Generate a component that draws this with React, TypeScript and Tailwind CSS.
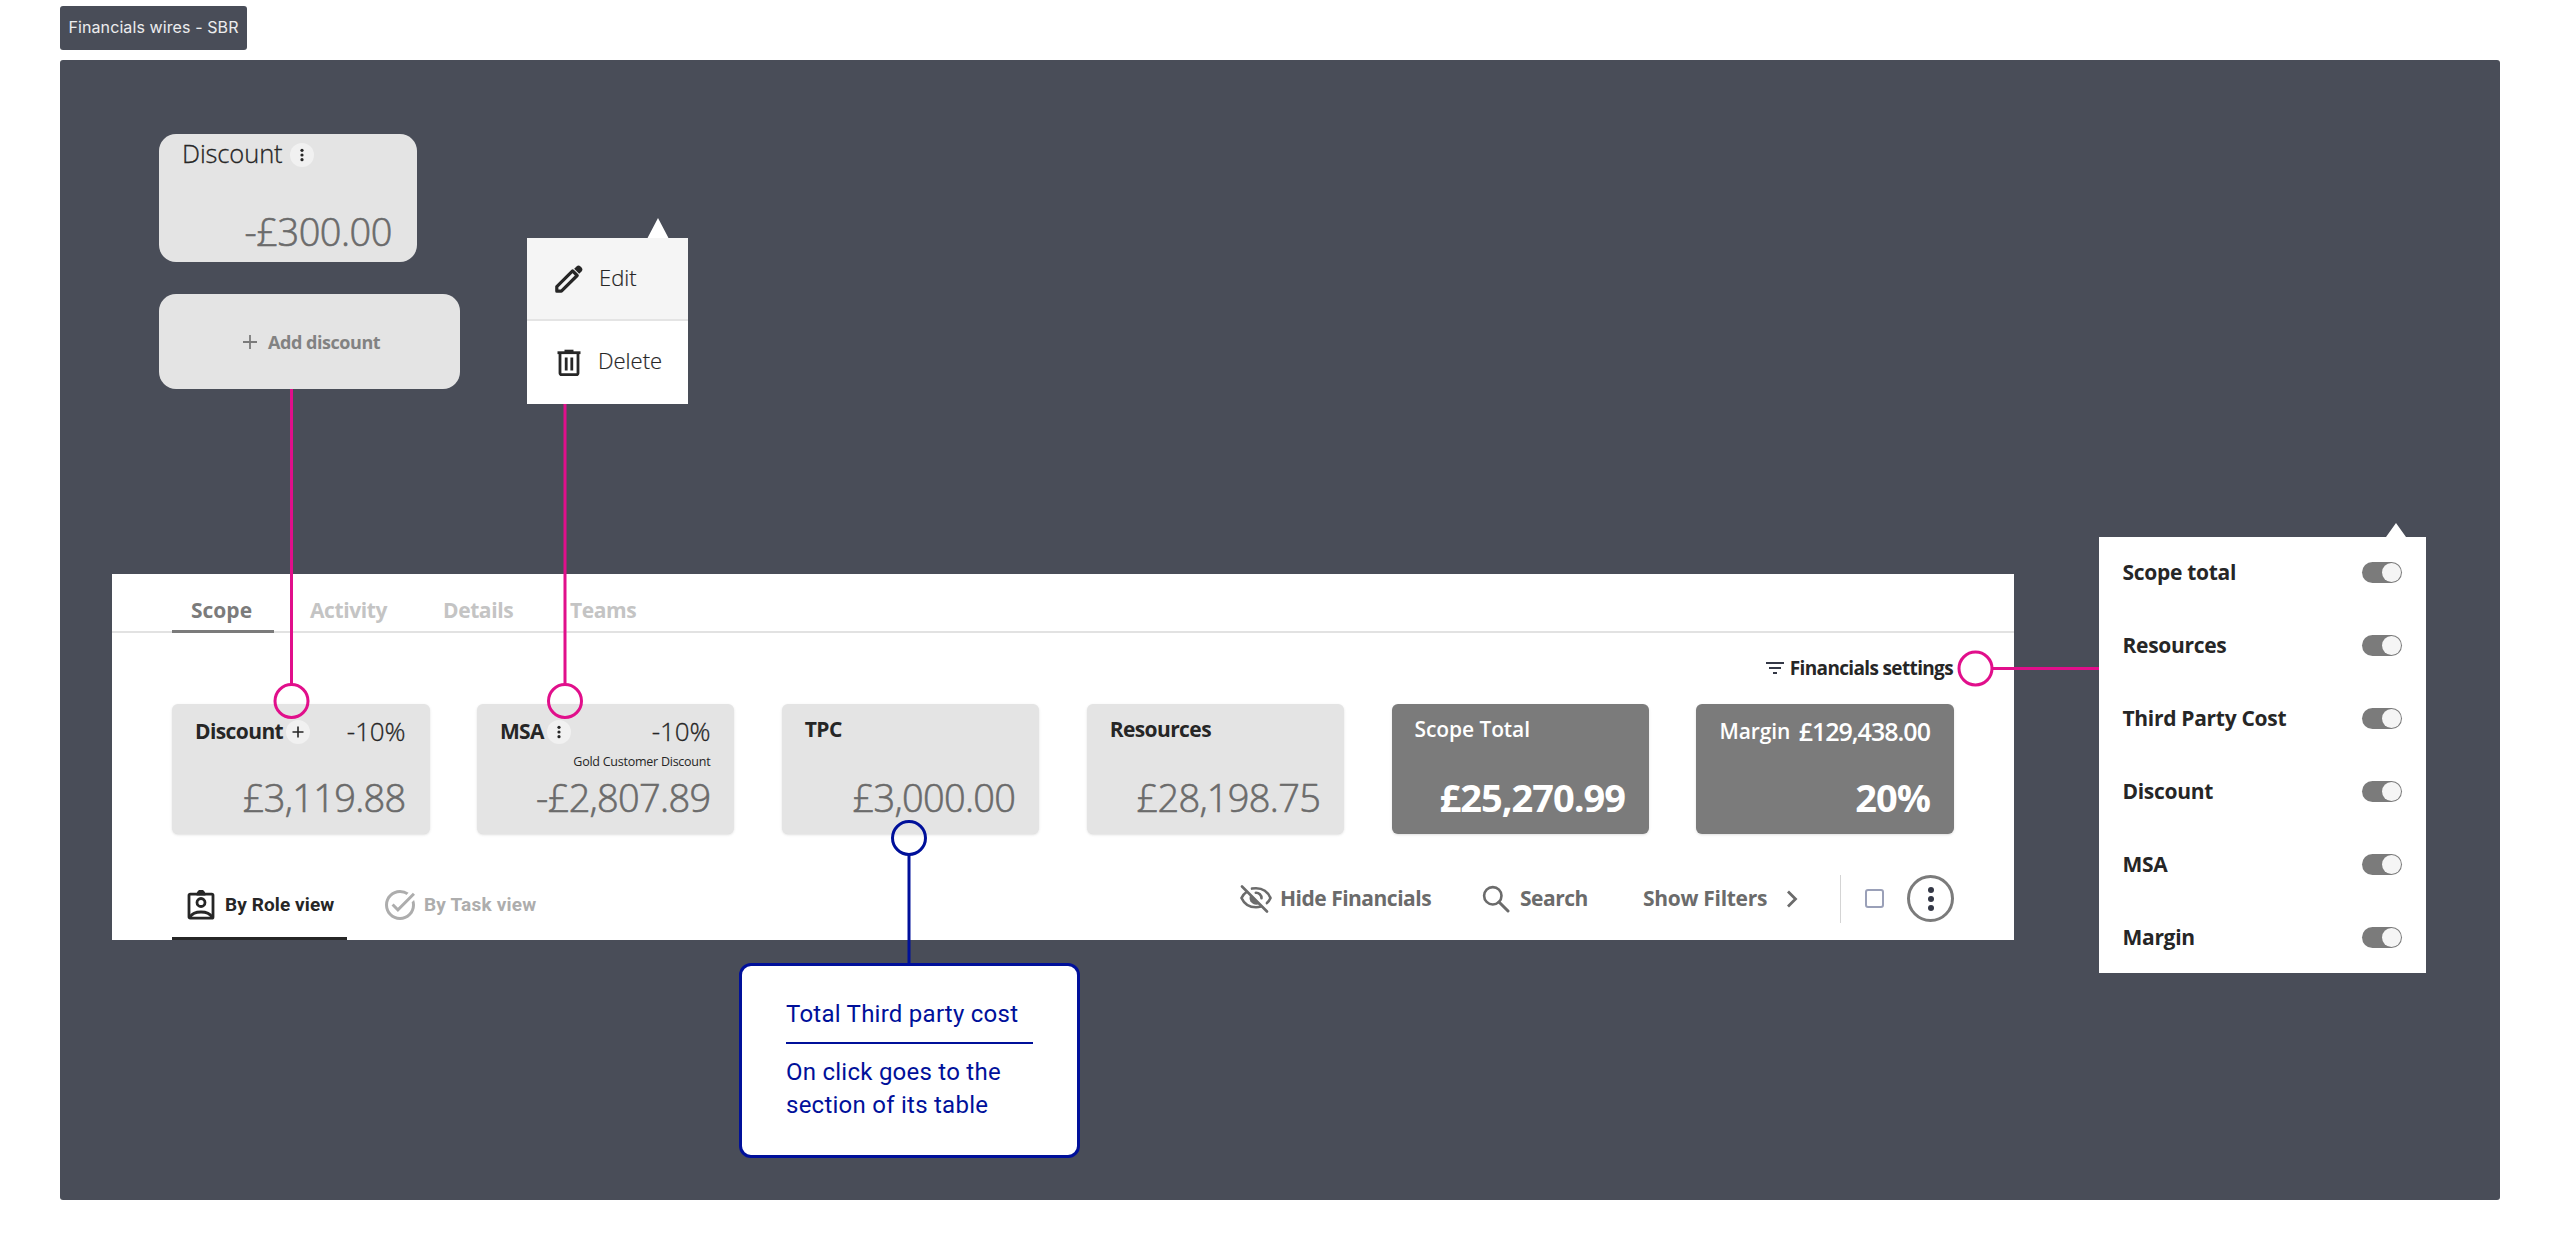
import React from 'react';
import { MdFilterList, MdTaskAlt } from 'react-icons/md';

type SummaryCard = {
  title: string;
  value: string;
  rate?: string;
  note?: string;
  badge?: 'plus' | 'dots';
  dark?: boolean;
};

const cards: SummaryCard[] = [
  { title: 'Discount', value: '£3,119.88', rate: '-10%', badge: 'plus' },
  { title: 'MSA', value: '-£2,807.89', rate: '-10%', note: 'Gold Customer Discount', badge: 'dots' },
  { title: 'TPC', value: '£3,000.00' },
  { title: 'Resources', value: '£28,198.75' },
  { title: 'Scope Total', value: '£25,270.99', dark: true },
  { title: 'Margin', value: '20%', rate: '£129,438.00', dark: true },
];

const settings = ['Scope total', 'Resources', 'Third Party Cost', 'Discount', 'MSA', 'Margin'];

const Dots = () => (
  <svg viewBox="0 0 24 24" className="size-6" fill="#262626">
    <circle cx="12" cy="7.3" r="1.6" />
    <circle cx="12" cy="12" r="1.6" />
    <circle cx="12" cy="16.7" r="1.6" />
  </svg>
);

const Plus = () => (
  <svg viewBox="0 0 24 24" className="size-6" stroke="#262626" strokeWidth="1.6">
    <path d="M12 6.5v11M6.5 12h11" />
  </svg>
);

const PencilIcon = () => (
  <svg viewBox="0 0 28 28" className="size-7" fill="none" stroke="#262626" strokeWidth="3.2">
    <path d="M1.8 26.2v-4.6L17.6 5.9l4.6 4.6L6.4 26.2z" strokeLinejoin="round" />
    <path d="M19.2 3.8 21.5 1.500a3 3 0 0 1 4 0l1 1a3 3 0 0 1 0 4l-2.300 2.300z" fill="#262626" stroke="none" />
  </svg>
);

const TrashIcon = () => (
  <svg viewBox="0 0 24 28" className="h-7 w-6" fill="none" stroke="#262626" strokeWidth="2.8">
    <path d="M.5 3.7h23" />
    <path d="M7.500 2h9" strokeWidth="2.6" />
    <path d="M3 4v20.200a1.500 1.500 0 0 0 1.500 1.500h15a1.500 1.500 0 0 0 1.500-1.500V4" />
    <path d="M9.200 8.500v13M14.800 8.500v13" />
  </svg>
);

const RoleIcon = () => (
  <svg viewBox="0 0 28 30" className="h-[30px] w-7" fill="none" stroke="#262626" strokeWidth="2.8">
    <rect x="2" y="4.2" width="24" height="24" rx="1.2" />
    <path d="M11 4a3 3 0 0 1 6 0z" />
    <circle cx="14" cy="12.5" r="4" />
    <path d="M3 27c2-3.600 6.500-5 11-5s9 1.400 11 5" />
  </svg>
);

const EyeOffIcon = () => (
  <svg viewBox="0 0 32 28" className="h-7 w-8" fill="none" stroke="#6b6b6b" strokeWidth="2.6" strokeLinecap="round">
    <path d="M6.500 7C4 8.700 2.300 11 1.500 13c2.500 5.500 8 9.300 14.500 9.300 1.600 0 3.200-.2 4.700-.7" />
    <path d="M12 3.600c1.300-.3 2.600-.4 4-.4 6.500 0 12 3.800 14.500 9.800-.8 1.900-2 3.700-3.600 5.100" />
    <path d="M10.200 10.200a6.600 6.600 0 0 0 9.600 8.300z" fill="#6b6b6b" stroke="none" />
    <path d="M15.800 7.700a5.400 5.400 0 0 1 5.700 5.500" />
    <path d="M2 1.500l25 25" />
  </svg>
);

const SearchIcon = () => (
  <svg viewBox="0 0 28 28" className="size-7" fill="none" stroke="#6b6b6b" strokeWidth="2.6">
    <circle cx="10.8" cy="10.8" r="8.7" />
    <path d="M17 17l9 9" strokeWidth="3" strokeLinecap="round" />
  </svg>
);

const Badge = ({ kind }: { kind: 'plus' | 'dots' }) => (
  <span className="flex size-6 shrink-0 items-center justify-center rounded-full bg-[#f1f1f1]">
    {kind === 'plus' ? <Plus /> : <Dots />}
  </span>
);

const Card = ({ card }: { card: SummaryCard }) => (
  <div
    className={`flex h-[129.5px] w-[257.5px] flex-col rounded-md pr-6 pl-[23px] shadow-sm ${
      card.dark ? 'bg-[#7b7b7b] text-white' : 'bg-[#e4e4e4] text-[#262626]'
    }`}
  >
    <div className={`flex h-6 items-center ${card.rate ? 'mt-4' : 'mt-[13.5px]'}`}>
      <span
        className={`text-[21px] whitespace-nowrap ${
          card.dark ? 'font-semibold tracking-[-0.1px]' : 'font-bold tracking-[-0.6px]'
        }`}
      >
        {card.title}
      </span>
      {card.badge && (
        <span className="ml-[3px]">
          <Badge kind={card.badge} />
        </span>
      )}
      {card.rate && (
        <span
          className={`ml-auto pb-[3px] leading-6 whitespace-nowrap ${
            card.dark
              ? 'text-[25px] font-semibold tracking-[-1px]'
              : 'text-[26px] font-light tracking-[-0.1px] [-webkit-text-stroke:0.3px]'
          }`}
        >
          {card.rate}
        </span>
      )}
    </div>
    {card.note && (
      <p className="mt-[10px] text-right text-[12.5px] leading-4 tracking-[-0.25px] whitespace-nowrap">{card.note}</p>
    )}
    <p
      className={`mt-auto mb-[18px] text-right text-[38px] leading-[38px] ${
        card.dark
          ? 'font-bold tracking-[-1px]'
          : 'font-light tracking-[-0.7px] text-[#6b6b6b] [-webkit-text-stroke:0.6px]'
      }`}
    >
      {card.value}
    </p>
  </div>
);

const ScopePanel = () => (
  <section className="absolute top-[574px] left-[112px] flex h-[366px] w-[1902px] flex-col bg-white">
    <nav className="flex h-[59px] shrink-0 border-b-2 border-[#e2e2e2] pl-[60px] text-[21px] leading-[73px] font-bold tracking-[-0.4px] text-[#c4c4c4]">
      <span className="z-10 h-[59px] w-[102px] border-b-[3px] border-[#7b7b7b] pl-[19px] tracking-[0px] text-[#7b7b7b]">
        Scope
      </span>
      <span className="ml-9 w-[78px]">Activity</span>
      <span className="ml-[55px] w-[71px]">Details</span>
      <span className="ml-14">Teams</span>
    </nav>
    <div className="mt-[21px] flex h-7 items-center justify-end gap-[3px] pr-[61px] text-[19px] font-bold text-[#262626]">
      <MdFilterList className="size-6 text-[#343846]" />
      <span className="tracking-[-0.65px]">Financials settings</span>
    </div>
    <div className="mt-[22px] flex justify-between pr-[60px] pl-[60px]">
      {cards.map((card) => (
        <Card key={card.title} card={card} />
      ))}
    </div>
    <div className="mt-auto flex h-[83px] items-start pl-[60px]">
      <div className="flex h-full w-[175px] items-center gap-[10px] border-b-[3px] border-[#262626] pt-4 pl-[15px] font-['Roboto'] text-[19px] font-bold text-[#262626]">
        <RoleIcon />
        <span className="tracking-[0.1px]">By Role view</span>
      </div>
      <div className="flex h-full items-center gap-[6px] pt-[13px] pl-[35px] font-['Roboto'] text-[19px] font-bold text-[#adadad]">
        <MdTaskAlt className="size-9" />
        <span className="tracking-[0.2px]">By Task view</span>
      </div>
      <div className="ml-auto flex h-full items-center pr-[60px] text-[21px] font-bold tracking-[-0.5px] text-[#6b6b6b]">
        <EyeOffIcon />
        <span className="ml-2 w-[150px] whitespace-nowrap">Hide Financials</span>
        <span className="ml-[52px] flex">
          <SearchIcon />
        </span>
        <span className="ml-[10px] w-[70px]">Search</span>
        <span className="ml-[53px] w-[124px] tracking-[-0.3px] whitespace-nowrap">Show Filters</span>
        <svg viewBox="0 0 12 18" className="ml-[19px] h-[18px] w-3" fill="none" stroke="#6b6b6b" strokeWidth="2.8">
          <path d="M2 1.500 9.500 9 2 16.500" />
        </svg>
        <span className="ml-[42px] h-12 w-px bg-[#d4d4d4]" />
        <span className="ml-6 size-[19px] rounded-[3px] border-2 border-[#9aa0b8]" />
        <span className="ml-[23px] flex size-[47px] items-center justify-center rounded-full border-[3px] border-[#7b7b7b]">
          <svg viewBox="0 0 8 26" className="h-[26px] w-2" fill="#343846">
            <circle cx="4" cy="4" r="3" />
            <circle cx="4" cy="13" r="3" />
            <circle cx="4" cy="22" r="3" />
          </svg>
        </span>
      </div>
    </div>
  </section>
);

const App = () => (
  <main className="relative h-[1260px] w-[2560px] overflow-hidden bg-white font-['Open_Sans',sans-serif]">
    <div className="absolute top-[6px] left-[60px] flex h-11 w-[187px] items-center justify-center rounded-[3px] bg-[#494d58] pb-[3px] font-['Inter'] text-base tracking-[0.1px] whitespace-nowrap text-white/90">
      Financials wires - SBR
    </div>
    <div className="absolute top-[60px] left-[60px] h-[1140px] w-[2440px] rounded-[3px] bg-[#494d58]" />

    <section className="absolute top-[134px] left-[159px] flex h-32 w-[258px] flex-col rounded-[17px] bg-[#e4e4e4] pr-[25px] pl-[23px]">
      <div className="mt-[7px] flex h-6 items-center gap-[7px]">
        <span className="text-[25.5px] font-light tracking-[-0.1px] text-[#262626] [-webkit-text-stroke:0.3px]">
          Discount
        </span>
        <span className="mt-[3px]">
          <Badge kind="dots" />
        </span>
      </div>
      <p className="mt-auto mb-[12px] text-right text-[38px] leading-[38px] font-light tracking-[-0.5px] text-[#6b6b6b] [-webkit-text-stroke:0.6px]">
        -£300.00
      </p>
    </section>

    <button className="absolute top-[294px] left-[159px] flex h-[95px] w-[301px] items-center rounded-[17px] bg-[#e4e4e4] pl-[84px] text-lg font-bold tracking-[-0.45px] text-[#828282]">
      <svg viewBox="0 0 14 14" className="mr-[11px] size-[14px]" stroke="#7b7b7b" strokeWidth="1.8">
        <path d="M7 0v14M0 7h14" />
      </svg>
      Add discount
    </button>

    <section className="absolute top-[238px] left-[527px] h-[166px] w-[161px] bg-white text-[22px] font-light text-[#262626] [-webkit-text-stroke:0.2px]">
      <div className="flex h-[83px] items-center gap-4 border-b-2 border-[#e4e4e4] bg-[#f5f5f5] pl-7">
        <PencilIcon />
        <span className="pb-[3px]">Edit</span>
      </div>
      <div className="flex h-[83px] items-center gap-[17px] pl-[30px]">
        <TrashIcon />
        <span className="pb-[5px]">Delete</span>
      </div>
    </section>

    <ScopePanel />

    <section className="absolute top-[537px] left-[2099px] flex h-[436px] w-[327px] flex-col bg-white pr-6 pl-[23.5px]">
      {settings.map((name) => (
        <div
          key={name}
          className="flex h-[73px] shrink-0 items-center justify-between pb-0.5 text-[21px] font-bold tracking-[-0.3px] text-[#262626]"
        >
          <span>{name}</span>
          <span className="flex h-[21px] w-10 items-center justify-end rounded-full bg-[#7b7b7b] pr-px">
            <span className="size-[19px] rounded-full bg-[#f5f5f5]" />
          </span>
        </div>
      ))}
    </section>

    <section className="absolute top-[963px] left-[739px] h-[195px] w-[341px] rounded-[12px] border-[3px] border-[#00109a] bg-white px-[44px] pt-[32px] font-['Roboto'] text-[24px] leading-[33px] tracking-[0.25px] text-[#00109a]">
      <p className="border-b-2 border-[#00109a] pb-[11px]">Total Third party cost</p>
      <p className="pt-[12px]">On click goes to the section of its table</p>
    </section>

    <svg viewBox="0 0 2560 1260" className="pointer-events-none absolute inset-0 h-[1260px] w-[2560px]" fill="none">
      <path d="M658 218 668.5 238H647.5zM2396 523l10 14h-20z" fill="#fff" />
      <g stroke="#e10f8b" strokeWidth="3">
        <path d="M291.5 389v295M565 404v280M1993 668.5h106" />
        <circle cx="291.5" cy="701" r="16.5" />
        <circle cx="565" cy="701" r="16.5" />
        <circle cx="1975.5" cy="668.5" r="16.5" />
      </g>
      <g stroke="#00109a" strokeWidth="3">
        <path d="M909 855v109" />
        <circle cx="909" cy="838" r="16.5" />
      </g>
    </svg>
  </main>
);

export default App;
